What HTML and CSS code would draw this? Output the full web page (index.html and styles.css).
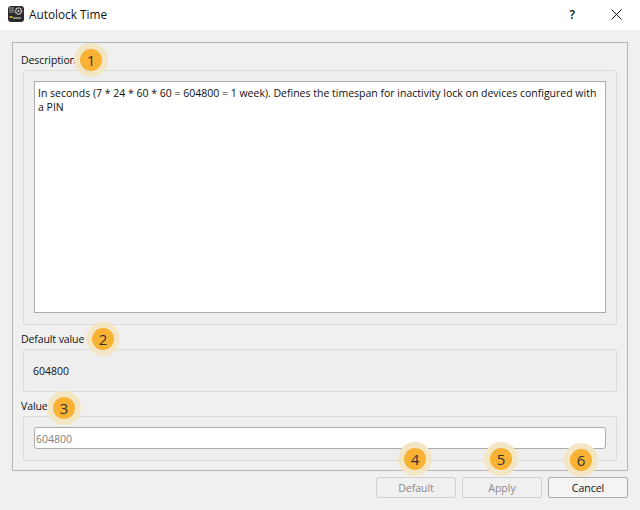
FILE: index.html
```html
<html>
<head>
    <title>Autolock Time</title>
    <link rel="stylesheet" href="styles.css">
</head>
<body>
    <div class="dialog">
        <div class="titlebar">
            <svg class="app-icon" width="16" height="16" viewBox="0 0 16 16">
                <rect x="0" y="0" width="16" height="16" rx="3" fill="#2b2b2b"/>
                <rect x="1" y="1" width="5" height="6" fill="#666"/>
                <circle cx="10.5" cy="5" r="3" fill="none" stroke="#d8d8d8" stroke-width="1.6" stroke-dasharray="1.5 0.7"/>
                <circle cx="10.5" cy="5" r="1" fill="#d8d8d8"/>
                <rect x="1.5" y="10" width="3" height="2" fill="#c9a227"/>
                <rect x="5" y="11" width="8" height="2" fill="#888"/>
            </svg>
            <span class="title">Autolock Time</span>
            <span class="help">?</span>
            <svg class="close" width="11" height="11" viewBox="0 0 11 11">
                <path d="M0.5 0.5 L10.5 10.5 M10.5 0.5 L0.5 10.5" stroke="#111" stroke-width="1" fill="none"/>
            </svg>
        </div>

        <div class="content">
            <div class="frame">
                <div class="label label-first">Description</div>
                <div class="group group-desc">
                    <div class="textbox">In seconds (7 * 24 * 60 * 60 = 604800 = 1 week). Defines the timespan for inactivity lock on devices configured with a PIN</div>
                </div>

                <div class="label">Default value</div>
                <div class="group group-default">604800</div>

                <div class="label">Value</div>
                <div class="group group-value">
                    <input class="field" type="text" placeholder="604800">
                </div>
            </div>

            <div class="buttons">
                <button class="btn" disabled>Default</button>
                <button class="btn" disabled>Apply</button>
                <button class="btn btn-on">Cancel</button>
            </div>
        </div>
    </div>

    <div class="badge b1">1</div>
    <div class="badge b2">2</div>
    <div class="badge b3">3</div>
    <div class="badge b4">4</div>
    <div class="badge b5">5</div>
    <div class="badge b6">6</div>
</body>
</html>
```

FILE: styles.css
```css
* {
    margin: 0px;
    padding: 0px;
    box-sizing: border-box;
}

body {
    width: 640px;
    height: 510px;
    overflow: hidden;
    background-color: #f0f0f0;
    font-family: "Open Sans", "Noto Sans", sans-serif;
    font-size: 10.5px;
    color: #111;
}

.titlebar {
    height: 30px;
    background-color: #ffffff;
    display: flex;
    align-items: center;
    padding-left: 8px;
    padding-bottom: 2px;
}

.app-icon {
    margin-right: 5px;
}

.title {
    font-size: 11.8px;
    flex: 1;
}

.help {
    font-size: 12px;
    font-weight: 600;
    margin-right: 36px;
}

.close {
    margin-right: 18px;
}

.content {
    padding: 12px 12px 0px 12px;
}

.frame {
    height: 429px;
    border: 1px solid #b4b4b4;
    padding: 0px 10px;
}

.label {
    height: 24px;
    line-height: 21px;
    padding-top: 4px;
    margin-left: -2px;
    letter-spacing: -0.1px;
}

.label-first {
    height: 27px;
    padding-top: 7px;
}

.group {
    border: 1px solid #dcdcdc;
    border-radius: 2px;
    background-color: #eeeeee;
    padding: 10px;
}

.group-desc {
    height: 255px;
}

.group-default {
    height: 43px;
    line-height: 23px;
    padding-left: 9px;
}

.group-value {
    height: 45px;
}

.textbox {
    height: 232px;
    background-color: #ffffff;
    border: 1px solid #ababab;
    padding: 4px 3px 3px 3px;
    line-height: 14px;
}

.field {
    display: block;
    width: 100%;
    height: 22px;
    border: 1px solid #ababab;
    border-radius: 3px;
    background-color: #ffffff;
    padding: 2px 1px 0px 1px;
    font-family: "Open Sans", "Noto Sans", sans-serif;
    font-size: 10.5px;
}

.field::placeholder {
    color: #808080;
    opacity: 1;
}

.buttons {
    display: flex;
    justify-content: flex-end;
    gap: 6px;
    margin-top: 6px;
}

.btn {
    width: 80px;
    height: 21px;
    border: 1px solid #d0d0d0;
    border-radius: 2px;
    background-color: #f0f0f0;
    color: #8a8a8a;
    font-family: "Open Sans", "Noto Sans", sans-serif;
    font-size: 10.5px;
}

.btn-on {
    border-color: #adadad;
    background-color: #f4f4f4;
    color: #111;
}

.badge {
    position: absolute;
    width: 22px;
    height: 22px;
    border-radius: 50%;
    background-color: #f9b233;
    box-shadow: 0px 0px 0px 6px #f3e6c4;
    text-align: center;
    line-height: 22px;
    font-size: 15px;
    color: #333;
}

.b1 { left: 80px; top: 49px; }
.b2 { left: 92px; top: 328px; }
.b3 { left: 53px; top: 397px; }
.b4 { left: 404px; top: 448px; }
.b5 { left: 490px; top: 448px; }
.b6 { left: 570px; top: 449px; }
```
